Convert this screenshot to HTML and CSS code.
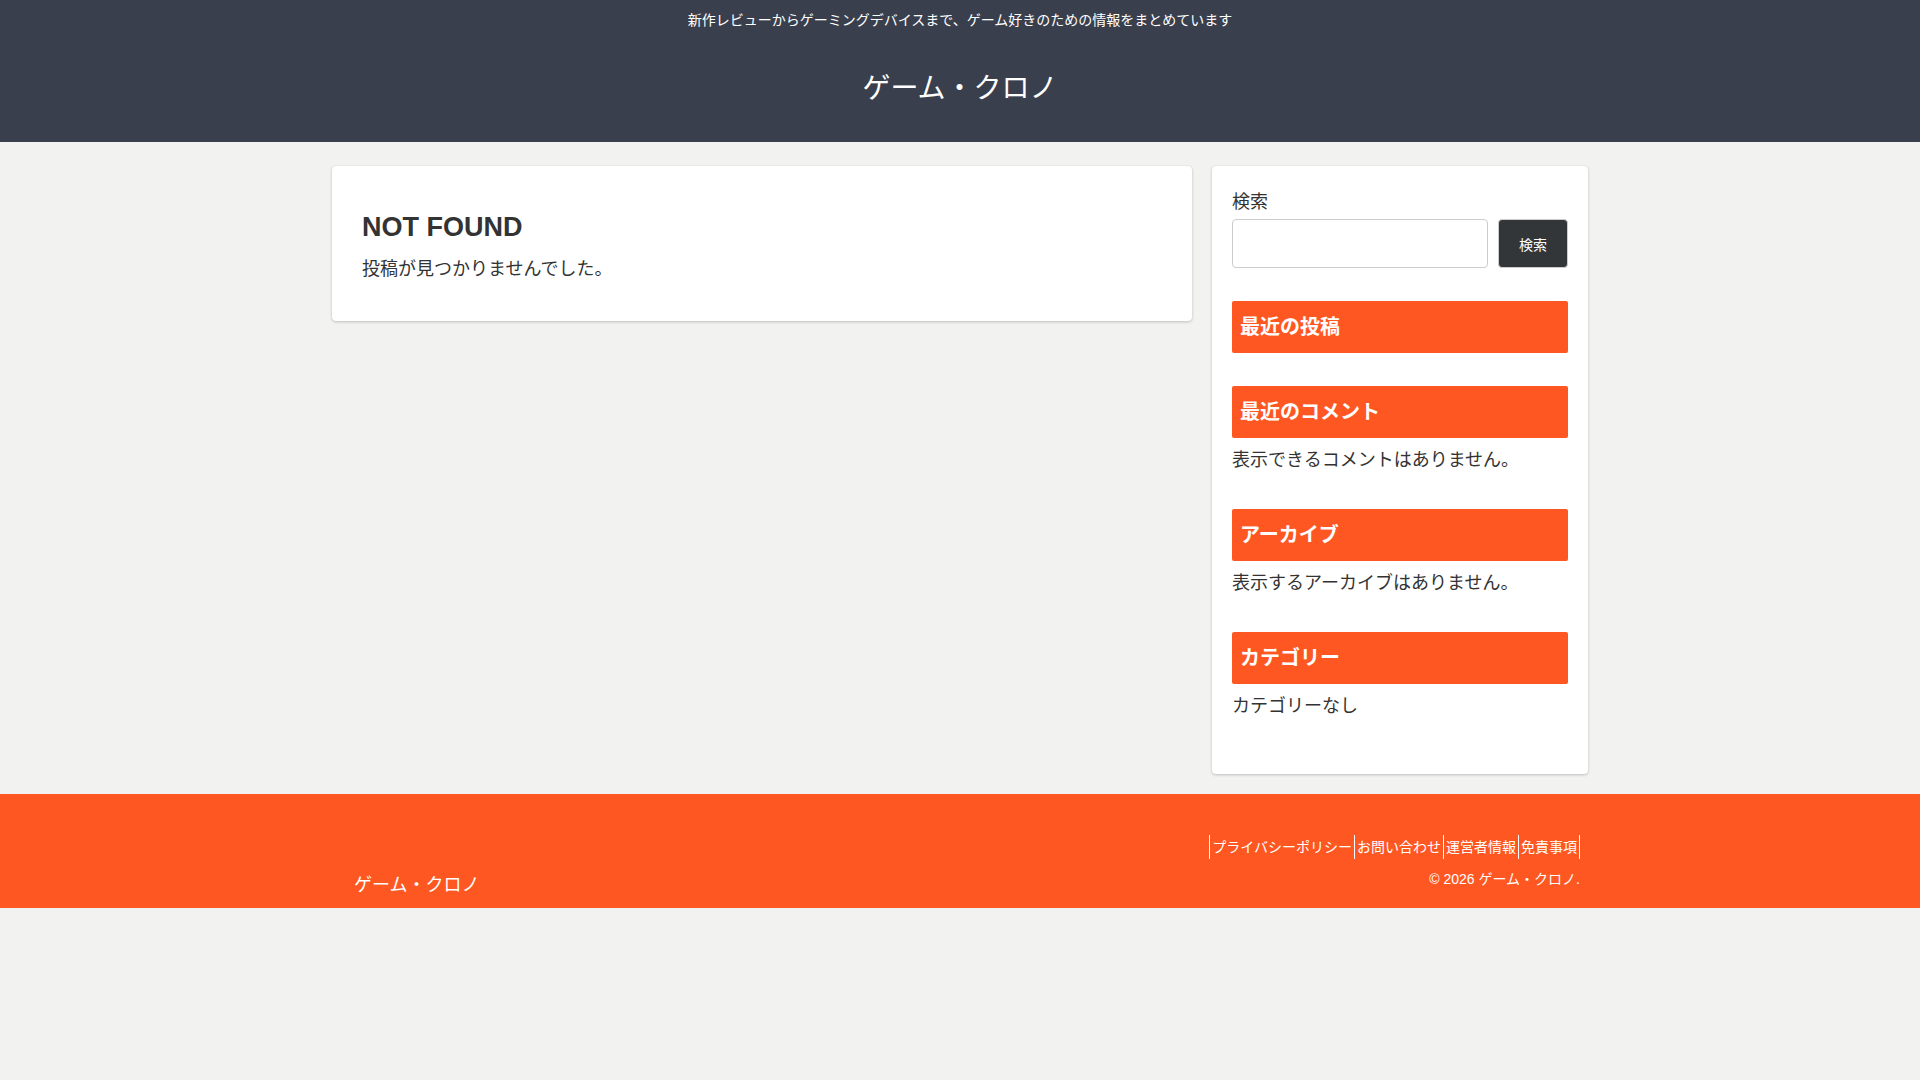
FILE: index.html
```html
<!DOCTYPE html>
<html lang="ja">
<head>
<meta charset="utf-8">
<title>ゲーム・クロノ</title>
<link rel="stylesheet" href="styles.css">
</head>
<body>
<header class="header">
  <div class="tagline">新作レビューからゲーミングデバイスまで、ゲーム好きのための情報をまとめています</div>
  <div class="logo"><a class="site-name" href="#">ゲーム・クロノ</a></div>
</header>

<div class="content">
  <main class="main card">
    <h1 class="entry-title">NOT FOUND</h1>
    <p class="entry-text">投稿が見つかりませんでした。</p>
  </main>

  <aside class="sidebar card">
    <section class="widget widget-search">
      <label class="search-label">検索</label>
      <div class="search-row">
        <input class="search-input" type="text">
        <button class="search-button">検索</button>
      </div>
    </section>
    <section class="widget">
      <h3 class="widget-title">最近の投稿</h3>
    </section>
    <section class="widget">
      <h3 class="widget-title">最近のコメント</h3>
      <p class="widget-text">表示できるコメントはありません。</p>
    </section>
    <section class="widget">
      <h3 class="widget-title">アーカイブ</h3>
      <p class="widget-text">表示するアーカイブはありません。</p>
    </section>
    <section class="widget">
      <h3 class="widget-title">カテゴリー</h3>
      <p class="widget-text">カテゴリーなし</p>
    </section>
  </aside>
</div>

<footer class="footer">
  <div class="footer-in">
    <div class="footer-logo">ゲーム・クロノ</div>
    <div class="footer-right">
      <nav class="footer-nav">
        <a href="#">プライバシーポリシー</a><a href="#">お問い合わせ</a><a href="#">運営者情報</a><a href="#" class="last">免責事項</a>
      </nav>
      <div class="copyright">© 2026 ゲーム・クロノ.</div>
    </div>
  </div>
</footer>
</body>
</html>
```

FILE: styles.css
```css
* { box-sizing: border-box; }

html, body {
  margin: 0;
  padding: 0;
}

body {
  background: #f2f2f0;
  color: #333;
  font-family: "Liberation Sans", "Noto Sans CJK JP", sans-serif;
  font-size: 18px;
}

a { color: inherit; text-decoration: none; }

/* Header */
.header {
  background: #3a3f4e;
  color: #fff;
  text-align: center;
  height: 142px;
}

.tagline {
  font-size: 14px;
  line-height: 24px;
  padding-top: 8px;
}

.logo {
  padding-top: 32px;
}

.site-name {
  font-size: 28px;
  line-height: 50px;
  color: #fff;
}

/* Content */
.content {
  width: 1256px;
  margin: 24px auto 20px;
  display: flex;
  align-items: flex-start;
  gap: 20px;
}

.card {
  background: #fff;
  border-radius: 4px;
  box-shadow: 0 1px 3px rgba(0, 0, 0, 0.2), 0 0 1px rgba(0, 0, 0, 0.12);
}

.main {
  width: 860px;
  padding: 36px 30px 36px;
}

.entry-title {
  margin: 8px 0 0;
  font-size: 27px;
  line-height: 35px;
  font-weight: bold;
  color: #333;
}

.entry-text {
  margin: 8px 0 0;
  line-height: 32px;
}

.sidebar {
  width: 376px;
  padding: 20px 20px 19px;
}

.widget {
  margin-bottom: 33px;
}

.search-label {
  display: block;
  line-height: 32px;
  color: #333;
}

.search-row {
  display: flex;
  gap: 10px;
  margin-top: 1px;
}

.search-input {
  flex: 1;
  height: 49px;
  border: 1px solid #ccc;
  border-radius: 4px;
  background: #fff;
  min-width: 0;
}

.search-button {
  width: 70px;
  height: 49px;
  border: 1px solid #ccc;
  border-radius: 4px;
  background: #333639;
  color: #fff;
  font-family: "Liberation Sans", "Noto Sans CJK JP", sans-serif;
  font-size: 14px;
  padding: 0;
}

.widget-title {
  margin: 0;
  background: #ff5722;
  color: #fff;
  font-size: 20px;
  font-weight: bold;
  line-height: 28px;
  padding: 12px 8px;
  border-radius: 2px;
}

.widget-text {
  margin: 6px 0 0;
  line-height: 32px;
}

/* Footer */
.footer {
  background: #ff5722;
  color: #fff;
}

.footer-in {
  width: 1256px;
  margin: 0 auto;
  height: 114px;
  padding: 41px 8px 7px 22px;
  display: flex;
  justify-content: space-between;
  align-items: flex-end;
}

.footer-logo {
  font-size: 18px;
  line-height: 32px;
}

.footer-right {
  display: flex;
  flex-direction: column;
  align-items: flex-end;
  padding-bottom: 9px;
  align-self: stretch;
}

.footer-nav {
  display: flex;
  font-size: 14px;
  line-height: 24px;
}

.footer-nav a {
  border-left: 1px solid #fff;
  padding: 0 2px;
}

.footer-nav a.last {
  border-right: 1px solid #fff;
}

.copyright {
  margin-top: 8px;
  font-size: 14px;
  line-height: 24px;
}
```
